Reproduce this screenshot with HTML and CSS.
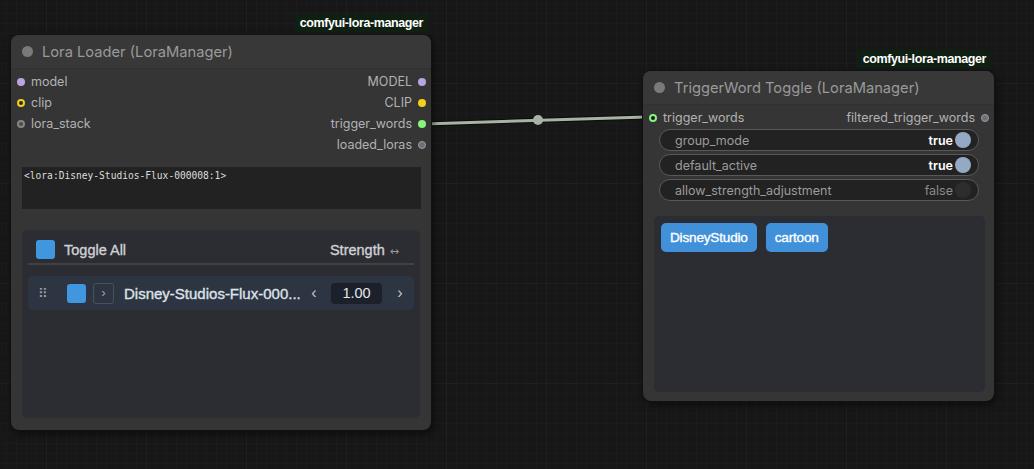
FILE: index.html
```html
<!DOCTYPE html>
<html>
  <head>
    <link rel="stylesheet" href="styles.css">
  </head>
  <body>
    <div class="canvas">
      <svg class="links" width="1034" height="469">
        <line x1="424" y1="124" x2="646" y2="117" stroke="#0c0c0c" stroke-width="5"/>
        <line x1="424" y1="124" x2="646" y2="117" stroke="#a7b4a4" stroke-width="3"/>
        <circle cx="538" cy="120" r="5" fill="#a7b4a4"/>
      </svg>

      <div class="node lora-loader">
        <div class="badge">comfyui-lora-manager</div>
        <div class="title"><span class="title-dot"></span>Lora Loader (LoraManager)</div>
        <div class="slots">
          <div class="slot-row">
            <div class="slot in"><span class="dot purple"></span>model</div>
            <div class="slot out">MODEL<span class="dot purple"></span></div>
          </div>
          <div class="slot-row">
            <div class="slot in"><span class="dot yellow ring"></span>clip</div>
            <div class="slot out">CLIP<span class="dot yellow"></span></div>
          </div>
          <div class="slot-row">
            <div class="slot in"><span class="dot grey ring"></span>lora_stack</div>
            <div class="slot out">trigger_words<span class="dot green"></span></div>
          </div>
          <div class="slot-row">
            <div class="slot in"></div>
            <div class="slot out">loaded_loras<span class="dot grey"></span></div>
          </div>
        </div>
        <div class="textarea">&lt;lora:Disney-Studios-Flux-000008:1&gt;</div>
        <div class="lora-panel">
          <div class="lora-header">
            <div class="check"></div>
            <span class="toggle-all">Toggle All</span>
            <span class="strength">Strength <span class="arrows">↔</span></span>
          </div>
          <div class="lora-row">
            <span class="handle">⠿</span>
            <div class="check"></div>
            <div class="expand">›</div>
            <span class="lora-name">Disney-Studios-Flux-000...</span>
            <span class="chev">‹</span>
            <div class="value">1.00</div>
            <span class="chev">›</span>
          </div>
        </div>
      </div>

      <div class="node trigger-toggle">
        <div class="badge">comfyui-lora-manager</div>
        <div class="title"><span class="title-dot"></span>TriggerWord Toggle (LoraManager)</div>
        <div class="slots">
          <div class="slot-row">
            <div class="slot in"><span class="dot green ring"></span>trigger_words</div>
            <div class="slot out">filtered_trigger_words<span class="dot grey"></span></div>
          </div>
        </div>
        <div class="toggles">
          <div class="pill"><span class="pill-label">group_mode</span><span class="pill-value on">true</span><span class="knob on"></span></div>
          <div class="pill"><span class="pill-label">default_active</span><span class="pill-value on">true</span><span class="knob on"></span></div>
          <div class="pill"><span class="pill-label">allow_strength_adjustment</span><span class="pill-value">false</span><span class="knob"></span></div>
        </div>
        <div class="tag-panel">
          <span class="tag">DisneyStudio</span>
          <span class="tag">cartoon</span>
        </div>
      </div>
    </div>
  </body>
</html>
```

FILE: styles.css
```css
body {
  margin: 0;
  background: #171717;
  font-family: Inter, "Liberation Sans", sans-serif;
  overflow: hidden;
}
.canvas {
  position: relative;
  width: 1034px;
  height: 469px;
  background-color: #171717;
  background-image:
    linear-gradient(to right, #1f1f1f 1px, transparent 1px),
    linear-gradient(to bottom, #1f1f1f 1px, transparent 1px),
    linear-gradient(to right, #1b1b1b 1px, transparent 1px),
    linear-gradient(to bottom, #1b1b1b 1px, transparent 1px);
  background-size: 100px 100px, 100px 100px, 10px 10px, 10px 10px;
  background-position: 46px 0, 0 83px, 6px 3px, 6px 3px;
}
.links {
  position: absolute;
  left: 0;
  top: 0;
}

/* nodes */
.node {
  position: absolute;
  background: #353535;
  border-radius: 8px;
  box-shadow: 0 0 0 1px #111, 2px 3px 8px rgba(0, 0, 0, 0.6);
  display: flex;
  flex-direction: column;
}
.lora-loader {
  left: 11px;
  top: 35px;
  width: 420px;
  height: 395px;
}
.trigger-toggle {
  left: 643px;
  top: 71px;
  width: 351px;
  height: 330px;
}
.badge {
  position: absolute;
  right: 3px;
  top: -21px;
  height: 18px;
  padding: 0 5px;
  background: #0f2012;
  color: #fff;
  font-family: "Liberation Sans", sans-serif;
  font-size: 12.5px;
  font-weight: 700;
  letter-spacing: -0.4px;
  line-height: 18px;
}
.title {
  height: 33px;
  display: flex;
  align-items: center;
  gap: 9px;
  padding-left: 11px;
  background: #383838;
  border-radius: 8px 8px 0 0;
  border-bottom: 1px solid #313131;
  color: #9a9a9a;
  font-size: 14.7px;
}
.title-dot {
  width: 11px;
  height: 11px;
  border-radius: 50%;
  background: #7a7a7a;
}

/* slots */
.slots {
  padding: 2px 0 0;
}
.slot-row {
  height: 21px;
  display: flex;
  justify-content: space-between;
  align-items: center;
}
.slot {
  display: flex;
  align-items: center;
  gap: 6px;
  color: #b2b2b2;
  font-size: 12.5px;
}
.slot.in {
  padding-left: 6px;
}
.slot.out {
  padding-right: 5px;
}
.dot {
  width: 8px;
  height: 8px;
  border-radius: 50%;
  box-sizing: border-box;
}
.dot.purple { background: #b9a4e0; }
.dot.yellow { background: #f5cf1a; }
.dot.green { background: #86f57a; }
.dot.grey { background: #6e6e76; border: 1px solid #9b9ba3; }
.dot.ring { border: 2px solid; background: #2a2a2a; }
.dot.yellow.ring { border-color: #f5cf1a; }
.dot.grey.ring { border-color: #858585; background: #4a4a4a; }
.dot.green.ring { border-color: #86f57a; background: #1a1a1a; }

/* lora loader widgets */
.textarea {
  margin: 12px 10px 0 11px;
  height: 42px;
  box-sizing: border-box;
  padding: 3px 2px;
  background: #222;
  color: #ddd;
  font-family: "DejaVu Sans Mono", monospace;
  font-size: 9.6px;
}
.lora-panel {
  margin: 21px 11px 12px 11px;
  flex: 1;
  background: #2c2d32;
  border-radius: 6px;
  padding: 6px 6px 0;
  font-family: "Liberation Sans", Arial, sans-serif;
}
.lora-header {
  height: 27px;
  display: flex;
  align-items: center;
  padding: 0 15px 0 8px;
  border-bottom: 2px solid #3f4147;
  margin-bottom: 11px;
}
.check {
  width: 19px;
  height: 19px;
  border-radius: 3px;
  background: #4196e0;
}
.toggle-all {
  margin-left: 9px;
  flex: 1;
  color: #cfd1d6;
  font-size: 14.5px;
  -webkit-text-stroke: 0.35px #cfd1d6;
}
.strength {
  color: #cfd1d6;
  font-size: 14.5px;
  -webkit-text-stroke: 0.35px #cfd1d6;
}
.arrows {
  color: #999;
  font-family: "DejaVu Sans", sans-serif;
  font-size: 11px;
  -webkit-text-stroke: 0;
  margin-left: 1px;
}
.lora-row {
  height: 34px;
  display: flex;
  align-items: center;
  background: #2e3542;
  border-radius: 5px;
  padding-left: 10px;
}
.handle {
  width: 14px;
  color: #9aa0aa;
  font-family: "DejaVu Sans", sans-serif;
  font-size: 13px;
  margin-right: 15px;
}
.expand {
  width: 19px;
  height: 19px;
  margin-left: 7px;
  border: 1px solid #4a505c;
  border-radius: 3px;
  color: #aaa;
  font-size: 12px;
  line-height: 18px;
  text-align: center;
}
.lora-name {
  margin-left: 10px;
  width: 182px;
  white-space: nowrap;
  color: #dfe2e8;
  font-size: 15px;
  -webkit-text-stroke: 0.35px #dfe2e8;
}
.chev {
  color: #c0c4cc;
  font-size: 16px;
  width: 16px;
  text-align: center;
}
.value {
  margin: 0 10px 0 9px;
  width: 51px;
  height: 21px;
  background: #1b202a;
  border-radius: 4px;
  color: #e4e6ea;
  font-size: 14.5px;
  line-height: 21px;
  text-align: center;
}

/* trigger toggle widgets */
.toggles {
  display: flex;
  flex-direction: column;
  gap: 3px;
  margin: 1px 15px 0 16px;
}
.pill {
  height: 22px;
  box-sizing: border-box;
  border: 1px solid #585858;
  border-radius: 11px;
  background: #222;
  display: flex;
  align-items: center;
  padding: 0 7px 0 15px;
}
.pill-label {
  flex: 1;
  color: #9c9c9c;
  font-size: 12.5px;
}
.pill-value {
  color: #8a8a8a;
  font-size: 12.5px;
  margin-right: 2px;
}
.pill-value.on {
  color: #fff;
  font-weight: 600;
}
.knob {
  width: 16px;
  height: 16px;
  border-radius: 50%;
  background: #2d2d2d;
}
.knob.on {
  background: #94a9c4;
}
.tag-panel {
  margin: 15px 9px 9px 11px;
  flex: 1;
  background: #2c2d32;
  border-radius: 5px;
  padding: 7px;
  display: flex;
  align-items: flex-start;
  gap: 9px;
}
.tag {
  height: 29px;
  padding: 0 9px;
  background: #4190da;
  border-radius: 5px;
  color: #fff;
  font-family: "Liberation Sans", Arial, sans-serif;
  font-size: 13.6px;
  -webkit-text-stroke: 0.35px #fff;
  line-height: 29px;
  letter-spacing: -0.2px;
}
```
